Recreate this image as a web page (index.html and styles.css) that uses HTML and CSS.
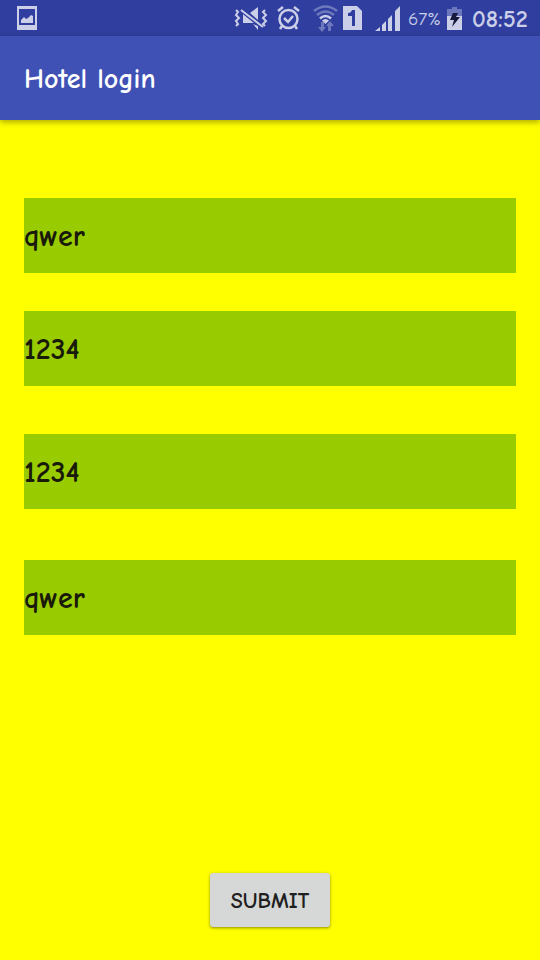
FILE: index.html
```html
<!DOCTYPE html>
<html lang="en">
<head>
<meta charset="utf-8">
<meta name="viewport" content="width=device-width, initial-scale=1">
<title>Hotel login</title>
<link rel="stylesheet" href="styles.css">
</head>
<body>
<div class="status">
  <svg class="picture" width="20" height="24" viewBox="0 0 20 24" aria-hidden="true"><path fill="currentColor" fill-rule="evenodd" d="M0 0h20v24H0zM2 3v16h16V3z"/><path fill="currentColor" d="M4 17v-3l3-3 2 2 2-1 3-3 2 1v7z"/></svg>
  <div class="signals">
    <svg width="35" height="24" viewBox="0 0 35 24" aria-hidden="true"><path fill="currentColor" d="M9 8l11 9H9zM16 7l8-6v13zM19 18l5 2v4z"/><path d="M7 4l22 17" stroke="#303f9f" stroke-width="4"/><path d="M7 4l22 17" stroke="currentColor" stroke-width="2"/><path fill="none" stroke="currentColor" stroke-width="2" d="M2 4l2 2-2 3 3 3-3 3 2 3-2 2M31 4l-2 2 3 3-3 3 3 3-3 3 2 2"/></svg>
    <svg width="23" height="24" viewBox="0 0 23 24" aria-hidden="true"><g fill="none" stroke="currentColor" stroke-width="2.500"><circle cx="11.500" cy="13" r="9"/><path d="M1 5l5-4M22 5l-5-4M5 20l-2 3M18 20l2 3"/><path d="M7 12l4 4 5-6"/></g></svg>
    <svg class="wifi" width="25" height="27" viewBox="0 0 25 27" aria-hidden="true"><g fill="none" stroke="currentColor" stroke-width="2.500"><g opacity=".4"><path d="M1 6Q12.500-3 24 6"/><path d="M4 10Q12.500 3 21 10"/></g><path d="M7 13.500Q12.500 8.500 18 13.500"/></g><path fill="currentColor" d="M9 15.500q3.500-3 7 0L12.500 19z"/><g fill="currentColor" opacity=".4"><path d="M8 17h3v5h2l-4 5-4-5h3zM15 26v-5h-2l4-5 4 5h-3v5z"/></g></svg>
    <svg class="sim" width="19" height="24" viewBox="0 0 19 24" aria-hidden="true"><path fill="currentColor" d="M0 0h14l5 5v19H0z"/><path fill="#303f9f" d="M9 4h3v16H9V10H5V7q3 0 4-3z"/></svg>
    <svg class="bars" width="25" height="25" viewBox="0 0 25 25" aria-hidden="true"><path fill="currentColor" d="M0 25l5-4v4zM7 19l4-4v10H7zM13 13l4-4v16h-4zM20 5l5-5v25h-5z"/></svg>
    <span class="percent">67%</span>
    <svg class="battery" width="15" height="23" viewBox="0 0 15 23" aria-hidden="true"><path fill="currentColor" opacity=".4" d="M5 0h5v2h5v7H0V2h5z"/><path fill="currentColor" d="M0 9h15v14H0z"/><path fill="#151a3d" d="M6 6h5L9 10h4l-8 10 2-7H3z"/></svg>
    <span class="clock">08:52</span>
  </div>
</div>
<header class="appbar"><h1>Hotel login</h1></header>
<form class="form">
  <input class="field" type="text" value="qwer" aria-label="Name">
  <input class="field" type="text" value="1234" aria-label="Number">
  <input class="field confirm" type="text" value="1234" aria-label="Confirm number">
  <input class="field last" type="text" value="qwer" aria-label="Confirm name">
  <button class="submit" type="button">SUBMIT</button>
</form>
</body>
</html>
```
FILE: styles.css
```css
* { box-sizing: border-box; }

body {
  margin: 0;
  min-height: 100vh;
  display: flex;
  flex-direction: column;
  background: #ffff00;
  color: #1a1a0a;
  font-family: "Comic Neue", "Comic Sans MS", Lato, sans-serif;
}

.status {
  display: flex;
  justify-content: space-between;
  align-items: center;
  height: 36px;
  padding: 0 13px 0 17px;
  background: #303f9f;
  color: #cbcfe8;
}

.signals { display: flex; align-items: center; }
.signals svg { flex: none; margin-right: 8px; }
.signals .wifi { margin: 0 5px; }
.signals .sim { margin-right: 13px; }
.signals .battery { margin-right: 10px; }
.percent { width: 39px; padding-top: 2px; font-size: 19px; }
.clock { width: 55px; padding-top: 2px; font-size: 24px; font-weight: 700; }

.appbar {
  display: flex;
  align-items: center;
  height: 84px;
  padding: 2px 24px 0;
  background: #3f51b5;
  color: #ffffff;
  box-shadow: 0 2px 6px rgba(0, 0, 0, 0.35);
}

.appbar h1 { margin: 0; font-size: 28px; font-weight: 700; }

.form {
  flex: 1;
  display: flex;
  flex-direction: column;
  gap: 38px;
  padding: 78px 24px 33px;
}

.field {
  width: 100%;
  height: 75px;
  padding: 2px 0 0;
  border: 0;
  border-radius: 0;
  background: #99cc00;
  color: inherit;
  font: 700 30px "Comic Neue", "Comic Sans MS", Lato, sans-serif;
}

.confirm { margin-top: 10px; }
.last { margin-top: 13px; }

.submit {
  align-self: center;
  width: 120px;
  height: 54px;
  margin-top: auto;
  padding: 2px 0 0;
  border: 0;
  border-radius: 3px;
  background: #d6d7d7;
  color: #202020;
  box-shadow: 0 1px 3px rgba(0, 0, 0, 0.45);
  font: 700 22px "Comic Neue", "Comic Sans MS", Lato, sans-serif;
}
```
